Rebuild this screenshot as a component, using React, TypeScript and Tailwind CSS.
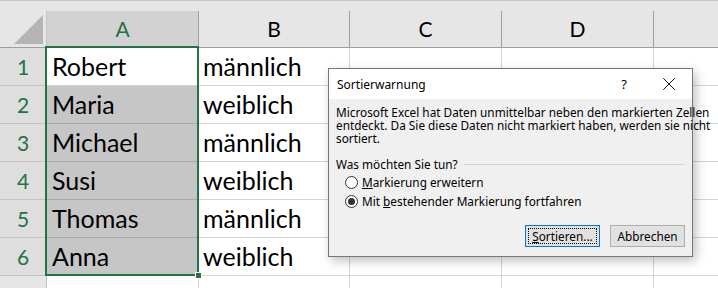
import { X } from 'lucide-react';

const rows = [
  { name: 'Robert', gender: 'männlich' },
  { name: 'Maria', gender: 'weiblich' },
  { name: 'Michael', gender: 'männlich' },
  { name: 'Susi', gender: 'weiblich' },
  { name: 'Thomas', gender: 'männlich' },
  { name: 'Anna', gender: 'weiblich' },
];

const cellFont = { fontFamily: 'Lato, "Liberation Sans", sans-serif' };
const uiFont = { fontFamily: '"Noto Sans", "Open Sans", sans-serif' };

function Radio({ checked }: { checked?: boolean }) {
  return (
    <span className="w-[13px] h-[13px] rounded-full border border-[#333] bg-white flex items-center justify-center shrink-0">
      {checked && <span className="w-[7px] h-[7px] rounded-full bg-[#333]" />}
    </span>
  );
}

function SortDialog() {
  return (
    <div
      className="absolute left-[328px] top-[68px] w-[365px] h-[189px] border border-[#777] bg-[#f0f0f0] shadow-[3px_4px_10px_rgba(0,0,0,0.25)] flex flex-col text-[11.8px] leading-[13px] text-black"
      style={uiFont}
    >
      {/* title bar */}
      <div className="h-[30px] bg-white flex items-center pl-[8px] pr-[12px]">
        <span className="flex-1 text-[12px]">Sortierwarnung</span>
        <span className="text-[13px] mr-[31px]">?</span>
        <X className="w-[22px] h-[22px]" strokeWidth={1} />
      </div>

      <div className="flex flex-col px-[7px] pt-[7px] flex-1">
        <p className="whitespace-nowrap">
          Microsoft Excel hat Daten unmittelbar neben den markierten Zellen
          <br />
          entdeckt. Da Sie diese Daten nicht markiert haben, werden sie nicht
          <br />
          sortiert.
        </p>

        <div className="flex items-center gap-[6px] mt-[13px]">
          <span>Was möchten Sie tun?</span>
          <span className="flex-1 h-px bg-[#d5d5d5]" />
        </div>

        <div className="flex flex-col gap-[6px] mt-[5px] pl-[9px]">
          <label className="flex items-center gap-[4px]">
            <Radio />
            <span>
              <span className="underline">M</span>arkierung erweitern
            </span>
          </label>
          <label className="flex items-center gap-[4px]">
            <Radio checked />
            <span>
              Mit <span className="underline">b</span>estehender Markierung fortfahren
            </span>
          </label>
        </div>

        <div className="flex justify-end gap-[10px] mt-auto mb-[9px] pr-[0px]">
          <button className="w-[75px] h-[22px] border border-[#0078d7] bg-[#e1e1e1] p-[2px]">
            <span className="w-full h-full border border-dotted border-black flex items-center justify-center">
              <span>
                <span className="underline">S</span>ortieren...
              </span>
            </span>
          </button>
          <button className="w-[75px] h-[22px] border border-[#adadad] bg-[#e1e1e1] flex items-center justify-center">
            Abbrechen
          </button>
        </div>
      </div>
    </div>
  );
}

export default function App() {
  const cols = [
    { label: 'B', w: 'w-[151px]' },
    { label: 'C', w: 'w-[152px]' },
    { label: 'D', w: 'w-[152px]' },
  ];

  return (
    <div className="relative w-[718px] h-[288px] overflow-hidden bg-white" style={cellFont}>
      {/* formula bar edge */}
      <div className="h-[11px] bg-[#e6e6e6] border-t border-[#c8c8c8]" />

      {/* column headers */}
      <div className="flex h-[37px] bg-[#e6e6e6] border-b border-[#9e9e9e] text-[21px]">
        <div className="w-[47px] shrink-0 border-r border-[#c4c4c4] relative">
          <svg className="absolute right-[3px] bottom-[3px]" width="29" height="29" viewBox="0 0 29 29">
            <polygon points="29,0 29,29 0,29" fill="#b4b4b4" />
          </svg>
        </div>
        <div className="w-[152px] shrink-0 bg-[#d2d2d2] border-r border-[#9e9e9e] flex items-center justify-center text-[#217346]">
          A
        </div>
        {cols.map((c) => (
          <div key={c.label} className={`${c.w} shrink-0 border-r border-[#9e9e9e] flex items-center justify-center text-black`}>
            {c.label}
          </div>
        ))}
        <div className="flex-1" />
      </div>

      {/* data rows */}
      {rows.map((r, i) => (
        <div key={r.name} className="flex h-[38px] text-[25px] text-black">
          <div className="w-[47px] shrink-0 bg-[#dedede] border-r border-b border-[#c4c4c4] flex items-center justify-center text-[21px] text-[#217346]">
            {i + 1}
          </div>
          <div
            className={`w-[152px] shrink-0 border-r border-b flex items-center pl-[5px] ${
              i === 0 ? 'bg-white border-[#d4d4d4]' : 'bg-[#c6c6c6] border-[#a9a9a9]'
            }`}
          >
            {r.name}
          </div>
          <div className="w-[151px] shrink-0 border-r border-b border-[#d4d4d4] flex items-center pl-[4px]">
            {r.gender}
          </div>
          <div className="w-[152px] shrink-0 border-r border-b border-[#d4d4d4]" />
          <div className="w-[152px] shrink-0 border-r border-b border-[#d4d4d4]" />
          <div className="flex-1 border-b border-[#d4d4d4]" />
        </div>
      ))}

      {/* row 7 */}
      <div className="flex h-[38px] text-[21px]">
        <div className="w-[47px] shrink-0 bg-[#e6e6e6] border-r border-[#c4c4c4] flex items-center justify-center text-[#222]">
          7
        </div>
        <div className="w-[152px] shrink-0 border-r border-[#d4d4d4]" />
        <div className="w-[151px] shrink-0 border-r border-[#d4d4d4]" />
        <div className="w-[152px] shrink-0 border-r border-[#d4d4d4]" />
        <div className="w-[152px] shrink-0 border-r border-[#d4d4d4]" />
      </div>

      {/* selection outline */}
      <div className="absolute left-[45px] top-[46px] w-[154px] h-[230px] border-2 border-[#217346] pointer-events-none" />
      <div className="absolute left-[195px] top-[272px] w-[7px] h-[7px] bg-[#217346] border border-white" />

      <SortDialog />
    </div>
  );
}
